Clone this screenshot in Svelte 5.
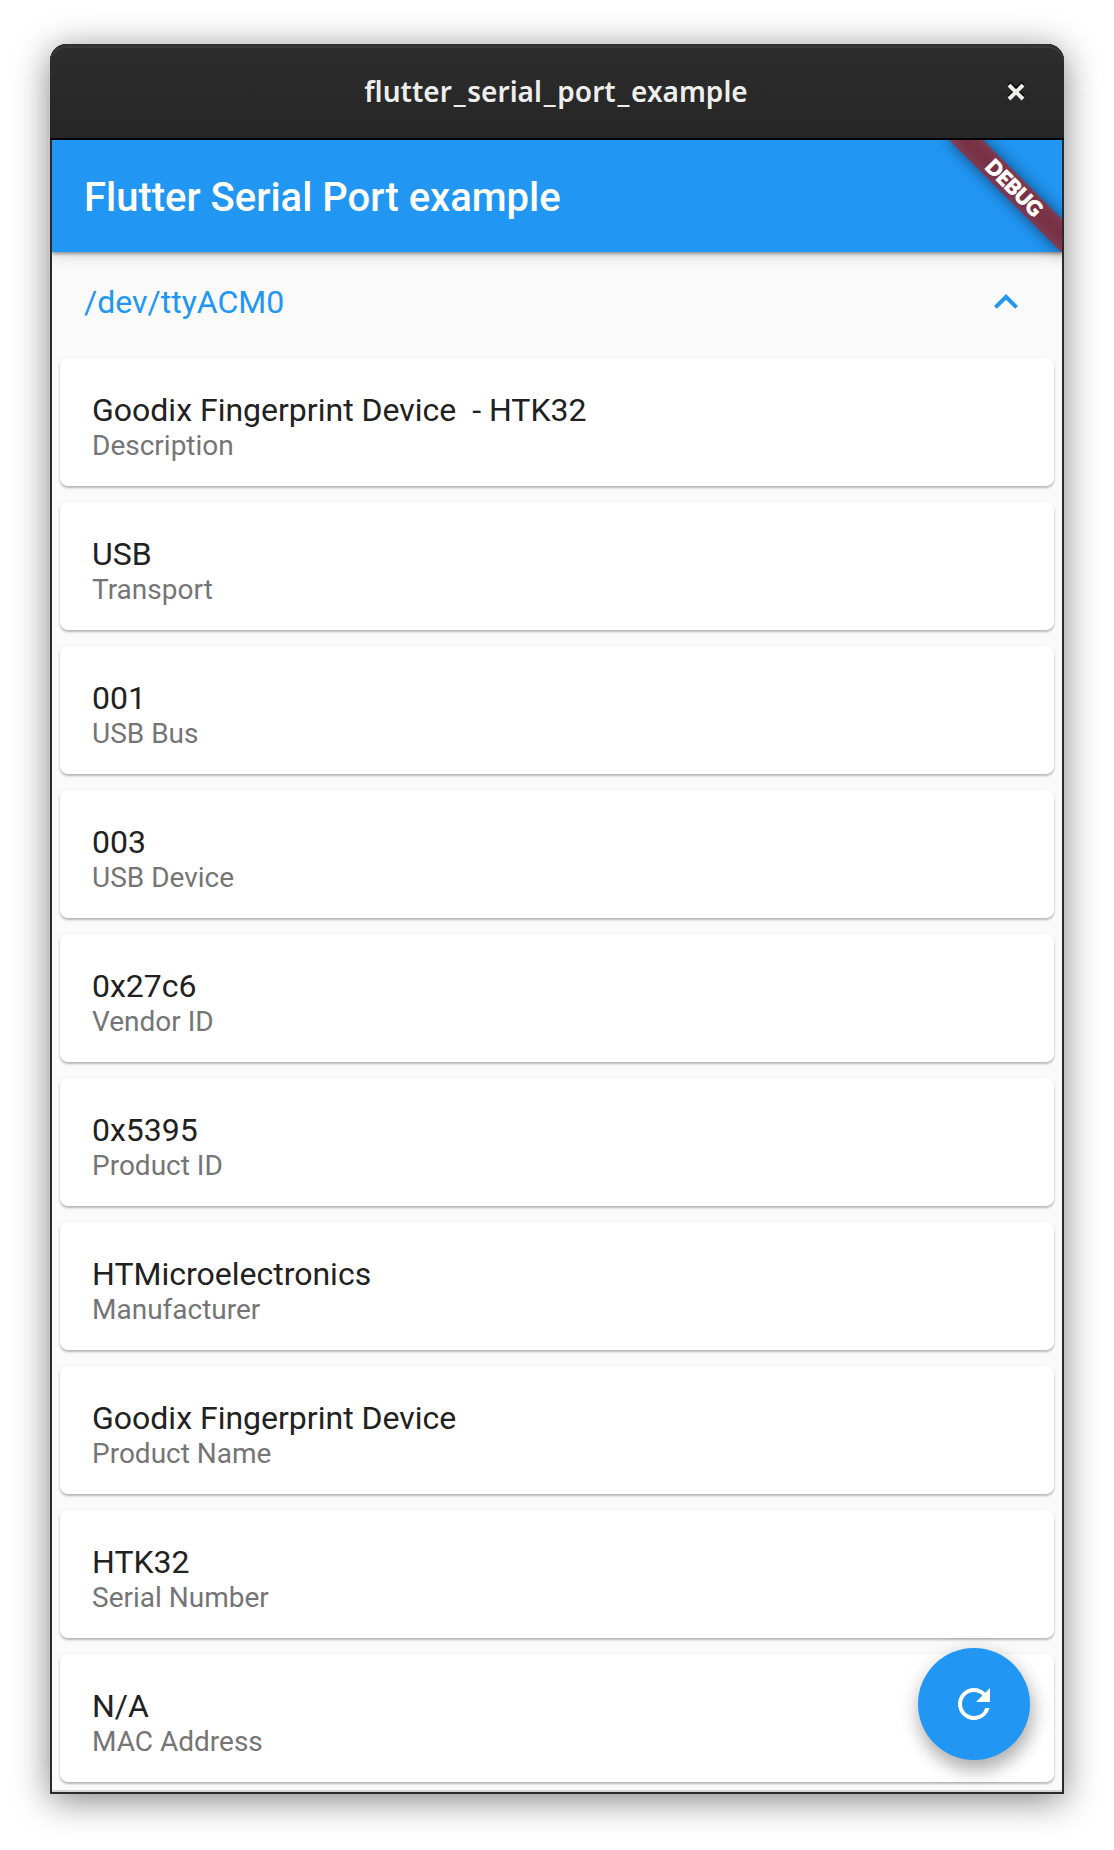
<script>
  const details = [
    { value: 'Goodix Fingerprint Device  - HTK32', label: 'Description' },
    { value: 'USB', label: 'Transport' },
    { value: '001', label: 'USB Bus' },
    { value: '003', label: 'USB Device' },
    { value: '0x27c6', label: 'Vendor ID' },
    { value: '0x5395', label: 'Product ID' },
    { value: 'HTMicroelectronics', label: 'Manufacturer' },
    { value: 'Goodix Fingerprint Device', label: 'Product Name' },
    { value: 'HTK32', label: 'Serial Number' },
    { value: 'N/A', label: 'MAC Address' },
  ];
  const titleParts = ['flutter', '_', 'serial', '_', 'port', '_', 'example'];
</script>

<div class="desktop">
  <div class="window">
    <header class="titlebar">
      <span></span>
      <span class="window-title">{#each titleParts as part}<span class:underscore={part === '_'}>{part}</span>{/each}</span>
      <button class="close" aria-label="Close">
        <svg width="20" height="22" viewBox="0 0 20 22" fill="none" stroke-width="4">
          <path d="M3 3L17 17M17 3L3 17" stroke="#000" />
          <path d="M3 5L17 19M17 5L3 19" stroke="#eeeeec" />
        </svg>
      </button>
    </header>

    <div class="app">
      <div class="appbar"><h1>Flutter Serial Port example</h1></div>

      <main>
        <button class="port">
          <span>/dev/ttyACM0</span>
          <svg width="48" height="48" viewBox="0 0 24 24" fill="#2196f3">
            <path d="M12 8l-6 6 1.41 1.41L12 10.83l4.59 4.58L18 14z" />
          </svg>
        </button>

        <div class="cards">
          {#each details as item}
            <div class="card">
              <div class="value">{item.value}</div>
              <div class="label">{item.label}</div>
            </div>
          {/each}
        </div>
      </main>

      <div class="banner"><span>DEBUG</span></div>
      <button class="fab" aria-label="Refresh">
        <svg width="48" height="48" viewBox="0 0 24 24" fill="#fff">
          <path d="M17.65 6.35A7.958 7.958 0 0 0 12 4c-4.42 0-7.99 3.58-7.99 8s3.57 8 7.99 8c3.73 0 6.84-2.55 7.73-6h-2.08A5.99 5.99 0 0 1 12 18c-3.31 0-6-2.69-6-6s2.69-6 6-6c1.66 0 3.14.69 4.22 1.78L13 11h7V4l-2.35 2.35z" />
        </svg>
      </button>
    </div>
  </div>
</div>

<style>
  :global(body) {
    background: #fff;
  }
  .desktop {
    box-sizing: border-box;
    height: 1850px;
    padding: 44px 50px 56px;
    overflow: hidden;
    font-family: Roboto, sans-serif;
  }
  button {
    border: 0;
    padding: 0;
    background: none;
    font: inherit;
  }
  svg {
    display: block;
  }
  .window {
    box-sizing: border-box;
    height: 1750px;
    display: flex;
    flex-direction: column;
    border: 2px solid #2a2a2c;
    border-top: 0;
    border-radius: 17px 17px 0 0;
    background: #2a2a2c;
    box-shadow: 0 6px 36px rgba(0, 0, 0, 0.49);
  }
  .titlebar {
    box-sizing: border-box;
    height: 96px;
    margin: 0 -2px;
    padding: 0 0 0 2px;
    display: grid;
    grid-template-columns: 92px 1fr 96px;
    align-items: center;
    border-radius: 17px 17px 0 0;
    border-bottom: 2px solid #030303;
    background: linear-gradient(#2d2d2d, #262626);
    box-shadow: inset 0 2px #2f2f2f, inset 0 4px #393939;
  }
  .window-title {
    text-align: center;
    font: 600 28px/40px 'Noto Sans', sans-serif;
    color: #eeeeec;
    white-space: nowrap;
  }
  .underscore {
    padding: 0 1.8px;
  }
  .close {
    justify-self: center;
  }
  .app {
    position: relative;
    flex: 1;
    overflow: hidden;
    isolation: isolate;
    background: #fafafa;
    box-shadow: inset 0 -2px #d5d5d5;
  }
  .appbar {
    box-sizing: border-box;
    position: relative;
    height: 112px;
    display: flex;
    align-items: center;
    padding: 4px 32px 0;
    background: #2196f3;
    box-shadow: 0 2px 3px rgba(0, 0, 0, 0.34), 0 4px 14px rgba(0, 0, 0, 0.15);
  }
  h1 {
    margin: 0;
    font-size: 40px;
    font-weight: 500;
    line-height: 48px;
    color: #fff;
  }
  .port {
    box-sizing: border-box;
    width: 100%;
    height: 98px;
    padding: 2px 32px 0;
    display: flex;
    align-items: center;
    justify-content: space-between;
    font-size: 32px;
    color: #2196f3;
  }
  .cards {
    display: flex;
    flex-direction: column;
    gap: 16px;
    padding: 8px;
  }
  .card {
    box-sizing: border-box;
    height: 128px;
    padding: 33px 32px 0;
    border-radius: 8px;
    background: #fff;
    box-shadow: 0 2px 2px rgba(0, 0, 0, 0.22), 0 1px 4px rgba(0, 0, 0, 0.09);
  }
  .value {
    font-size: 32px;
    line-height: 38px;
    white-space: pre;
    color: #212121;
  }
  .label {
    font-size: 28px;
    line-height: 33px;
    color: #757575;
  }
  .banner {
    position: absolute;
    top: 36px;
    right: -32px;
    width: 160px;
    height: 24px;
    transform: rotate(45deg);
    text-align: center;
    font: 900 20.4px/23px Lato, sans-serif;
    -webkit-text-stroke: 0.9px #fff;
    color: #fff;
  }
  .banner::before,
  .banner::after {
    content: '';
    position: absolute;
    inset: 0;
    z-index: -2;
    background: rgba(0, 0, 0, 0.5);
    filter: blur(8px);
  }
  .banner::after {
    z-index: -1;
    background: rgba(183, 28, 28, 0.627);
    filter: none;
  }
  .fab {
    position: absolute;
    right: 32px;
    bottom: 32px;
    width: 112px;
    height: 112px;
    display: grid;
    place-items: center;
    border-radius: 50%;
    background: #2196f3;
    box-shadow: 2px 10px 18px rgba(0, 0, 0, 0.27), 1px 4px 24px rgba(0, 0, 0, 0.1);
  }
</style>
